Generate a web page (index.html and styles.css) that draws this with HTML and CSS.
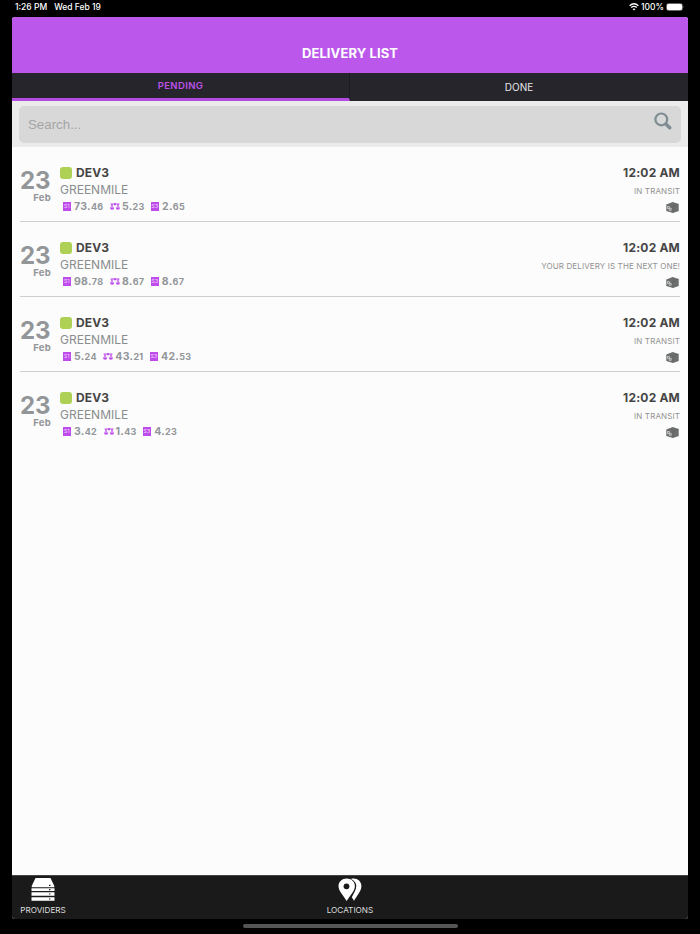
FILE: index.html
```html
<!DOCTYPE html>
<html lang="en">
<head>
    <meta charset="UTF-8">
    <meta name="viewport" content="width=device-width, initial-scale=1.0">
    <title>Delivery List</title>
    <link rel="stylesheet" href="styles.css">
</head>
<body>
    <!-- shared icons -->
    <svg class="icon-defs">
        <symbol id="icon-s1" viewBox="0 0 8 9">
            <rect width="8" height="9" fill="#bd4cea"/>
            <text x="4" y="6.3" class="icon-text">S1</text>
        </symbol>
        <symbol id="icon-s3" viewBox="0 0 8 9">
            <rect width="8" height="9" fill="#bd4cea"/>
            <text x="4" y="6.3" class="icon-text">S3</text>
        </symbol>
        <symbol id="icon-scale" viewBox="0 0 10 8">
            <path d="M.5 1h9M2 1v3.500M8 1v3.500" fill="none" stroke="#bd4cea" stroke-width="1"/>
            <path d="M.8 4.500L2 1.500l1.200 3M6.800 4.500l1.200-3 1.200 3" fill="none" stroke="#bd4cea" stroke-width=".4"/>
            <path d="M0 4.500h4.200q0 2.200-2.100 2.200T0 4.500zM5.800 4.500H10q0 2.200-2.100 2.200T5.800 4.500zM4 .3h2v1.900H4z" fill="#bd4cea"/>
        </symbol>
        <symbol id="icon-box" viewBox="0 0 13 11">
            <path d="M.3 2.4L6.7 0l6 1.9v7L7 11 .3 8.900z" fill="#6b6e6d"/>
            <path d="M7 4.100l5.500-2M7 4.100v6.600" fill="none" stroke="#5a5d5c" stroke-width=".4"/>
            <path d="M1.500 4.500h1.900v1.800h1.800v2H3.300V6.500H1.500z" fill="none" stroke="#e2e2e2" stroke-width=".7"/>
        </symbol>
    </svg>

    <div class="status-bar">
        <span class="clock">1:26 PM</span>
        <span>Wed Feb 19</span>
        <div class="status-right">
            <svg width="10" height="8" viewBox="0 0 10 8">
                <path d="M.6 2.7Q5-1.1 9.4 2.7M2.2 4.6q2.8-2.3 5.6 0" fill="none" stroke="#fff" stroke-width="1.3"/>
                <path d="M3.5 6q1.5-1.2 3 0L5 7.6z" fill="#fff"/>
            </svg>
            <span>100%</span>
            <svg width="19" height="8" viewBox="0 0 19 8">
                <rect x=".5" y=".5" width="16" height="7" rx="2" fill="none" stroke="#666"/>
                <rect x="1" y="1" width="15" height="6" rx="1.3" fill="#fff"/>
                <path d="M17.5 2.7q1 1.3 0 2.6z" fill="#777"/>
            </svg>
        </div>
    </div>

    <div class="app">
        <div class="header"><h1>DELIVERY LIST</h1></div>

        <div class="tabs">
            <div class="tab active">PENDING</div>
            <div class="tab">DONE</div>
        </div>

        <div class="search">
            <div class="search-box">
                <input type="text" placeholder="Search...">
                <svg width="18" height="18" viewBox="0 0 18 18">
                    <circle cx="7.3" cy="7.4" r="5.9" fill="none" stroke="#7f8c92" stroke-width="2.2"/>
                    <path d="M11.9 12l3.8 3.7" stroke="#7f8c92" stroke-width="3.5" stroke-linecap="round"/>
                </svg>
            </div>
        </div>

        <div class="list">
            <div class="row">
                <div class="date"><span class="day">23</span><span class="month">Feb</span></div>
                <div class="info">
                    <div class="name"><i class="dot"></i>DEV3</div>
                    <div class="company">GREENMILE</div>
                    <div class="sizes">
                        <span class="size"><svg class="square"><use href="#icon-s1"/></svg><b>73.<small>46</small></b></span>
                        <span class="size"><svg class="scale"><use href="#icon-scale"/></svg><b>5.<small>23</small></b></span>
                        <span class="size"><svg class="square"><use href="#icon-s3"/></svg><b>2.<small>65</small></b></span>
                    </div>
                </div>
                <div class="state">
                    <span class="time">12:02 AM</span>
                    <span class="status">IN TRANSIT</span>
                    <svg class="box"><use href="#icon-box"/></svg>
                </div>
            </div>

            <div class="row">
                <div class="date"><span class="day">23</span><span class="month">Feb</span></div>
                <div class="info">
                    <div class="name"><i class="dot"></i>DEV3</div>
                    <div class="company">GREENMILE</div>
                    <div class="sizes">
                        <span class="size"><svg class="square"><use href="#icon-s1"/></svg><b>98.<small>78</small></b></span>
                        <span class="size"><svg class="scale"><use href="#icon-scale"/></svg><b>8.<small>67</small></b></span>
                        <span class="size"><svg class="square"><use href="#icon-s3"/></svg><b>8.<small>67</small></b></span>
                    </div>
                </div>
                <div class="state">
                    <span class="time">12:02 AM</span>
                    <span class="status">YOUR DELIVERY IS THE NEXT ONE!</span>
                    <svg class="box"><use href="#icon-box"/></svg>
                </div>
            </div>

            <div class="row">
                <div class="date"><span class="day">23</span><span class="month">Feb</span></div>
                <div class="info">
                    <div class="name"><i class="dot"></i>DEV3</div>
                    <div class="company">GREENMILE</div>
                    <div class="sizes">
                        <span class="size"><svg class="square"><use href="#icon-s1"/></svg><b>5.<small>24</small></b></span>
                        <span class="size"><svg class="scale"><use href="#icon-scale"/></svg><b>43.<small>21</small></b></span>
                        <span class="size"><svg class="square"><use href="#icon-s3"/></svg><b>42.<small>53</small></b></span>
                    </div>
                </div>
                <div class="state">
                    <span class="time">12:02 AM</span>
                    <span class="status">IN TRANSIT</span>
                    <svg class="box"><use href="#icon-box"/></svg>
                </div>
            </div>

            <div class="row">
                <div class="date"><span class="day">23</span><span class="month">Feb</span></div>
                <div class="info">
                    <div class="name"><i class="dot"></i>DEV3</div>
                    <div class="company">GREENMILE</div>
                    <div class="sizes">
                        <span class="size"><svg class="square"><use href="#icon-s1"/></svg><b>3.<small>42</small></b></span>
                        <span class="size"><svg class="scale"><use href="#icon-scale"/></svg><b>1.<small>43</small></b></span>
                        <span class="size"><svg class="square"><use href="#icon-s3"/></svg><b>4.<small>23</small></b></span>
                    </div>
                </div>
                <div class="state">
                    <span class="time">12:02 AM</span>
                    <span class="status">IN TRANSIT</span>
                    <svg class="box"><use href="#icon-box"/></svg>
                </div>
            </div>
        </div>

        <div class="bottom-nav">
            <div class="nav-item">
                <svg width="24" height="24" viewBox="0 0 24 24">
                    <path d="M4.500 0h15l3.800 8v1.300H.7V8z" fill="#fff"/>
                    <path d="M.5 10.200h23v2.900H.5zM.5 14.300h23v3.500H.5zM.5 19.200h23v3.500H.5z" fill="#fff"/>
                    <path d="M18 7.300h1.400M18 11.600h1.400M18 16h1.400M18 21h1.400" stroke="#1a1a1a" stroke-width="1.2"/>
                </svg>
                <span>PROVIDERS</span>
            </div>
            <div class="nav-item">
                <svg width="24" height="24" viewBox="0 0 24 24">
                    <path d="M12.8 1C18-.8 23.4 2.5 23.4 8c0 5.5-4.3 9.2-7.4 14.8l-2.2-3.6C15.8 15 18.3 11.7 18.3 8c0-3-1.900-5.500-5.500-7z" fill="#fff"/>
                    <path d="M8.700.5C4 .5.500 3.800.500 8c0 5 4.800 9.200 8.200 15 3.400-5.800 8.200-10 8.200-15C16.900 3.800 13.400.5 8.700.5z" fill="#fff"/>
                    <circle cx="8.500" cy="8.300" r="2.900" fill="#1a1a1a"/>
                </svg>
                <span>LOCATIONS</span>
            </div>
        </div>
    </div>

    <div class="home-bar"></div>
</body>
</html>
```
FILE: styles.css
```css
* {
    box-sizing: border-box;
}
body {
    font-family: Inter, "Liberation Sans", sans-serif;
    margin: 0;
    height: 934px;
    background-color: #000;
    overflow: hidden;
}
svg {
    display: block;
    flex-shrink: 0;
}
.icon-defs {
    display: none;
}
.icon-text {
    font-size: 5px;
    fill: #f6dcff;
    text-anchor: middle;
}

.status-bar {
    display: flex;
    align-items: center;
    height: 17px;
    padding: 0 15px 3px;
    color: #fff;
    font-size: 8.5px;
    font-weight: 500;
}
.clock {
    margin-right: 7px;
}
.status-right {
    display: flex;
    align-items: center;
    gap: 2px;
    margin-left: auto;
}

.app {
    display: flex;
    flex-direction: column;
    width: 676px;
    height: 902px;
    margin: 0 auto;
    border-radius: 3px;
    background-color: #fcfcfc;
    overflow: hidden;
}
.header {
    height: 56px;
    padding-top: 28px;
    background-color: #bb58eb;
    text-align: center;
}
.header h1 {
    margin: 0;
    color: #fff;
    font-size: 13px;
    font-weight: 700;
    letter-spacing: 0.1px;
    line-height: 17px;
}

.tabs {
    display: flex;
    height: 28px;
    background-color: #26252b;
}
.tab {
    width: 50%;
    color: #e8e8e8;
    font-size: 10px;
    line-height: 28px;
    text-align: center;
}
.tab.active {
    border-right: 1px solid #1c1b20;
    border-bottom: 3px solid #b44be0;
    color: #bd52ea;
    font-size: 9.5px;
    font-weight: 600;
    letter-spacing: 0.4px;
    line-height: 26px;
}

.search {
    height: 46px;
    padding: 5px 7px 4px;
    background-color: #ebebeb;
}
.search-box {
    display: flex;
    height: 37px;
    padding: 6px 9px;
    border-radius: 5px;
    background-color: #d8d8d8;
}
.search-box input {
    flex: 1;
    height: 25px;
    padding: 0;
    border: none;
    outline: none;
    background: none;
    font-family: "Liberation Sans", sans-serif;
    font-size: 13.3px;
}
.search-box input::placeholder {
    color: #a5a5a5;
}

.list {
    flex: 1;
}
.row {
    display: flex;
    height: 75px;
    margin: 0 8px;
    padding-top: 18px;
    border-bottom: 1px solid #cfcfcf;
}
.row:last-child {
    border-bottom: none;
}
.date {
    display: flex;
    flex-direction: column;
    width: 31px;
    margin-right: 9px;
    padding-top: 4px;
    color: #929699;
    font-weight: 700;
}
.day {
    font-size: 24px;
    line-height: 23px;
    letter-spacing: -0.1px;
}
.month {
    font-size: 9.5px;
    line-height: 11px;
    letter-spacing: 0.3px;
    text-align: right;
}
.name {
    display: flex;
    align-items: center;
    color: #454545;
    font-size: 12px;
    font-weight: 700;
    letter-spacing: 0.1px;
    line-height: 16px;
}
.dot {
    width: 12px;
    height: 12px;
    margin-right: 4px;
    border-radius: 3px;
    background-color: #aed155;
}
.company {
    color: #8a8d8e;
    font-size: 12px;
    line-height: 17px;
}
.sizes {
    display: flex;
    gap: 6.5px;
    padding-left: 3px;
}
.size {
    display: flex;
    align-items: center;
    gap: 3px;
    height: 17px;
    color: #929699;
    font-size: 10.5px;
    letter-spacing: 0.3px;
}
.size b {
    font-weight: 700;
}
.size small {
    font-size: 9px;
}
.square {
    width: 8px;
    height: 9px;
}
.scale {
    width: 10px;
    height: 8px;
    margin-right: -1px;
}
.state {
    display: flex;
    flex-direction: column;
    align-items: flex-end;
    margin-left: auto;
}
.time {
    color: #454545;
    font-size: 12px;
    font-weight: 700;
    letter-spacing: 0.2px;
    line-height: 16px;
}
.status {
    color: #929292;
    font-size: 8px;
    letter-spacing: 0.12px;
    line-height: 20px;
}
.box {
    width: 13px;
    height: 11px;
    margin: 1px 1px 0 0;
}

.bottom-nav {
    display: flex;
    height: 44px;
    border-top: 1px solid #444;
    background-color: #1a1a1a;
}
.nav-item {
    display: flex;
    flex-direction: column;
    align-items: center;
    width: 62px;
    padding-top: 2px;
    color: #dedede;
    font-size: 8.2px;
    line-height: 16px;
}
.nav-item + .nav-item {
    margin-left: 245px;
}

.home-bar {
    width: 215px;
    height: 4px;
    margin: 5px auto 0;
    border-radius: 2px;
    background-color: #555;
}
```
